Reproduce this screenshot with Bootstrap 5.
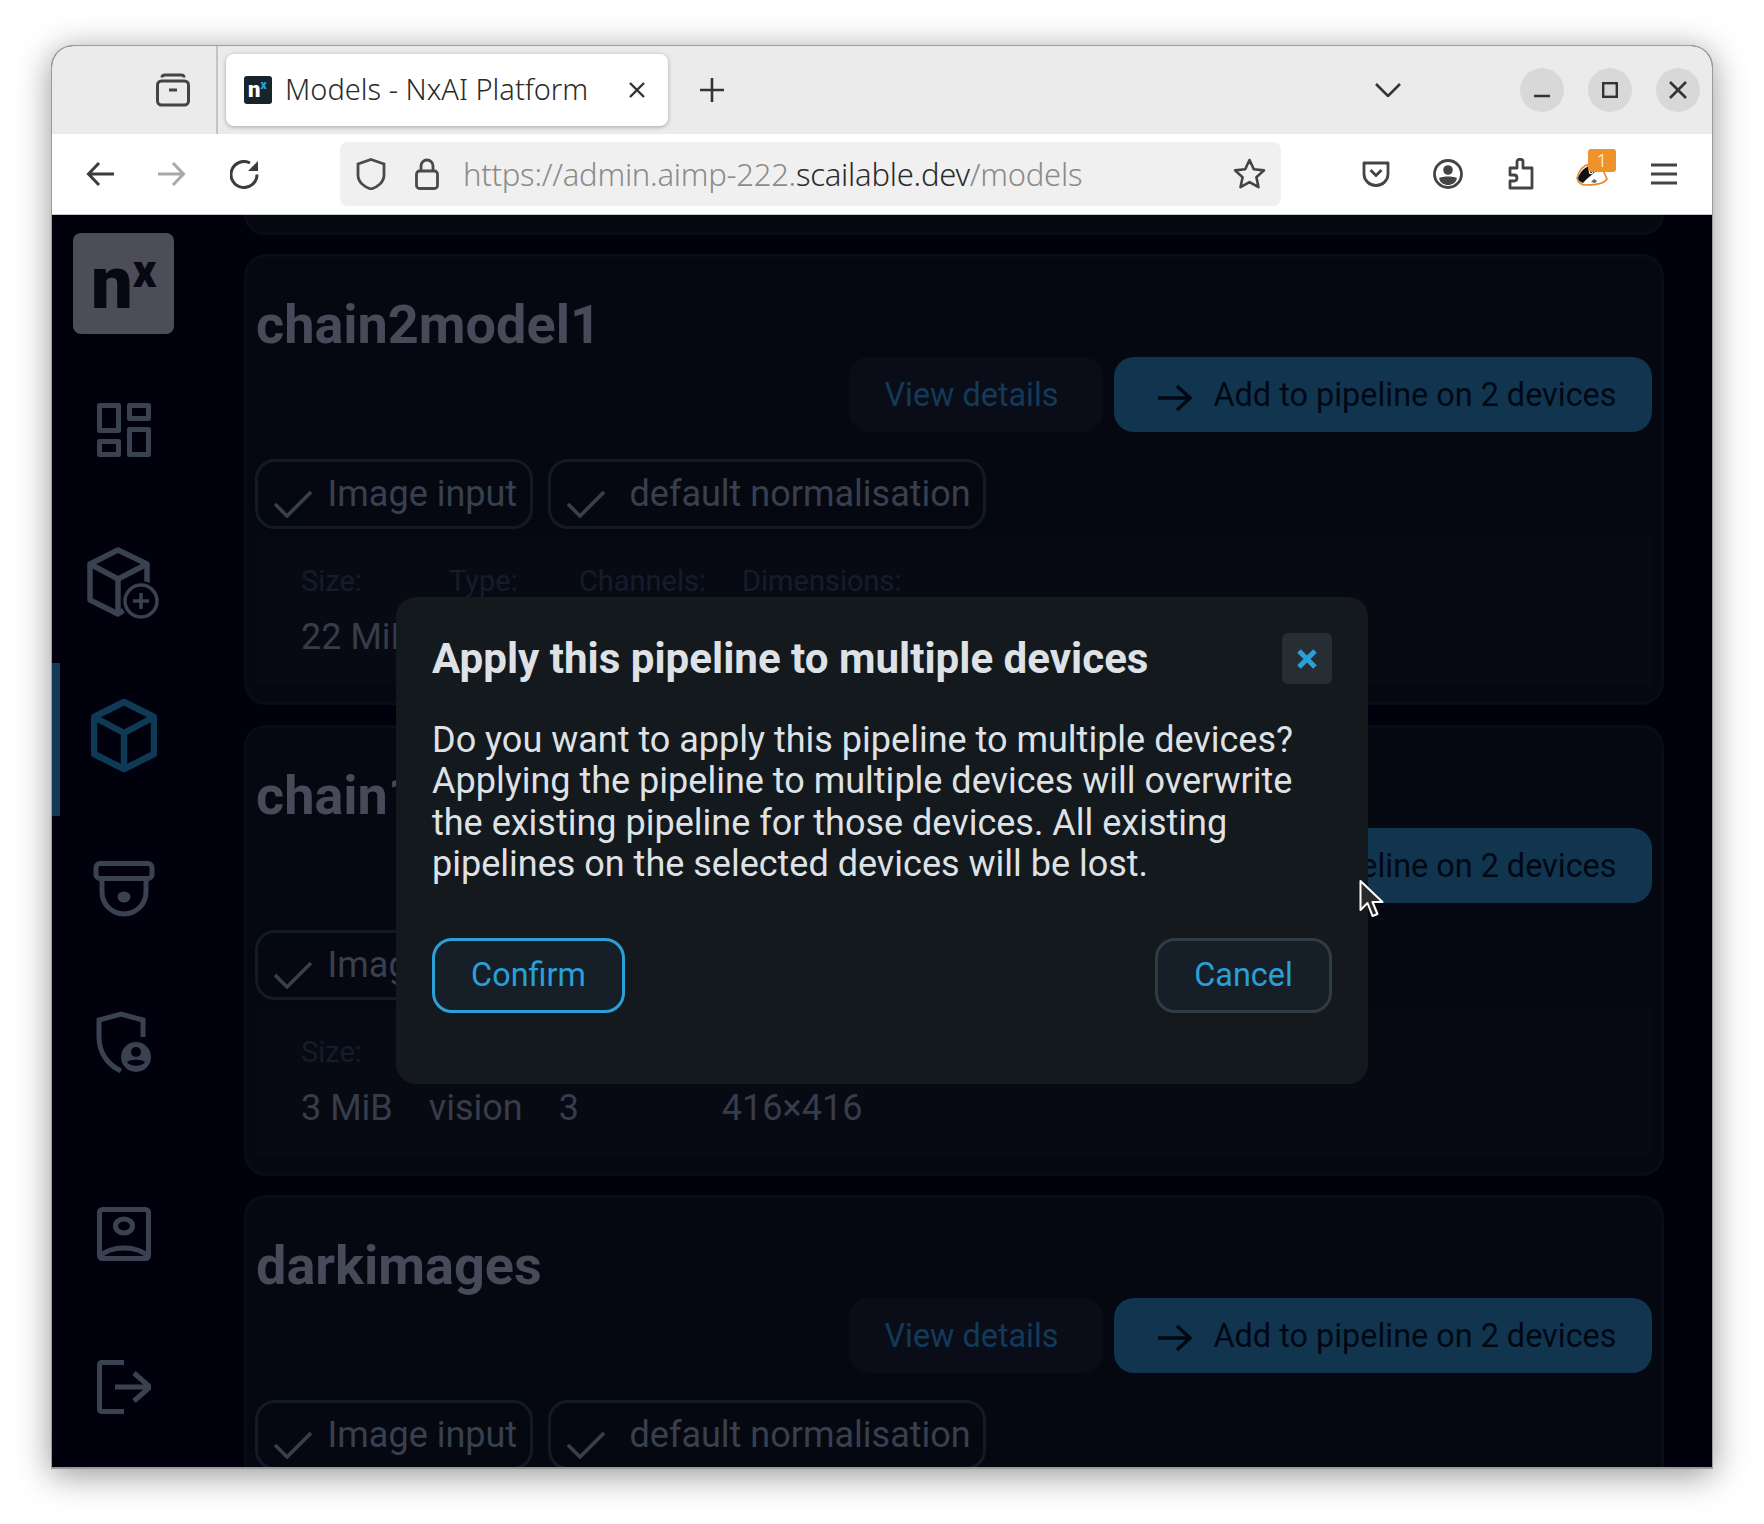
<!doctype html>
<html lang="en">
<head>
  <meta charset="UTF-8">
  <meta name="viewport" content="width=device-width, initial-scale=1">
  <title>Models - NxAI Platform</title>
  <link href="https://cdn.jsdelivr.net/npm/bootstrap@5.3.3/dist/css/bootstrap.min.css" rel="stylesheet">
  <style>
    html, body { width: 1764px; height: 1524px; overflow: hidden; background: #fff; }
    body { font-family: Roboto, "Liberation Sans", sans-serif; }

    /* browser window */
    .win { width: 1662px; height: 1424px; margin: 45px 0 0 51px; border: 1px solid #9b9b9b; border-bottom-width: 2px; border-radius: 22px 22px 0 0; box-shadow: 0 6px 34px rgba(0,0,0,.42); overflow: hidden; background: #01010d; }
    .strip { height: 88px; flex: none; background: #ebebeb; padding-right: 12px; }
    .view-cell { width: 166px; height: 100%; border-right: 2px solid #c4c4c4; padding-left: 104px; }
    .tabx { width: 442px; height: 72px; margin-left: 8px; background: #fff; border-radius: 8px; box-shadow: 0 1px 4px rgba(0,0,0,.3); padding: 0 22px 0 18px; }
    .tab-title { font: 300 29px "Noto Sans", Lato, sans-serif; color: #2b2b2b; margin: -3px 0 0 13px; white-space: nowrap; }
    .fav { width: 28px; height: 28px; background: #17242c; border-radius: 3px; color: #fff; font: 900 22px/27px Roboto, sans-serif; padding-left: 4px; }
    .fav sup { color: #2b9fd8; font-size: 12px; top: -.7em; }
    .plus-btn { margin-left: 32px; }
    .chev { margin-left: auto; margin-right: 95px; }
    .wbtn { width: 44px; height: 44px; border-radius: 50%; background: #d8d8d8; margin-left: 24px; }
    .tools { height: 81px; flex: none; background: #fff; border-bottom: 1px solid #c8c8c8; padding: 8px 12px 8px 34px; }
    .tools-nav { gap: 44px; }
    .url { width: 941px; height: 64px; margin-left: 81px; background: #f0f0f0; border-radius: 8px; padding: 0 15px 0 16px; }
    .lock-ic { margin-left: 29px; }
    .url-text { font: 300 31px "Noto Sans", Lato, sans-serif; color: #8b8b8b; margin-left: 24px; white-space: nowrap; letter-spacing: -.25px; }
    .url-text b { font-weight: 300; color: #2b2b2b; }
    .tcell { width: 72px; height: 64px; position: relative; }
    .badge-count { position: absolute; left: 32px; top: 7px; width: 28px; height: 23px; background: #f0922b; border-radius: 3px; color: #fff; font: 300 18px/23px "Noto Sans", sans-serif; text-align: center; }

    /* app */
    .app { flex: 1; min-height: 0; position: relative; overflow: hidden; }
    .side { width: 192px; flex: none; padding-top: 18px; }
    .logo-box { width: 101px; height: 101px; margin: 0 0 23px 21px; background: #4d4d59; border-radius: 8px; color: #070812; font: 900 74px/100px Roboto, sans-serif; padding: 0 0 0 18px; }
    .logo-box sup { font-size: 46px; top: -.46em; }
    .side-item { height: 153px; width: 146px; padding-bottom: 7px; border-left: 8px solid transparent; }
    .side-item.on { border-left-color: #123a57; }
    .side-gap { height: 39px; }
    .side-item svg { margin-left: -10px; }

    .list { flex: 1; padding-right: 48px; min-width: 0; }
    .mcard { background: #060811; border: 3px solid #090b15; border-radius: 22px; height: 451px; margin-bottom: 19.25px; padding: 0 9px; color: #474a58; }
    .mcard.stub { height: 20px; border-top: 0; border-radius: 0 0 22px 22px; }
    .mname { font-size: 54px; font-weight: 700; line-height: 60px; margin: 0; padding-top: 38px; height: 100px; color: #474a58; }
    .act-row { gap: 11px; }
    .act { height: 75px; border-radius: 20px; font-size: 32.4px; line-height: 75px; padding: 1px 0 0; border: 0; }
    .act-view { width: 254px; background: #0a0d17; color: #123a5a; padding-right: 9px; }
    .act-add { width: 538px; background: #12354f; color: #000814; padding-left: 9px; }
    .act-add svg { margin-right: 21px; }
    .tag-row { gap: 15px; margin: 27px 0 0 -1px; }
    .ftag { height: 70px; border: 3px solid #121a28; border-radius: 20px; color: #38404f; font-size: 36px; line-height: 64px; white-space: nowrap; }
    .ftag svg { margin-top: 28px; flex: none; }
    .ftag-a { width: 278px; padding-left: 16px; }
    .ftag-a svg { margin-right: 15.5px; }
    .ftag-b { width: 438px; padding-left: 16px; }
    .ftag-b svg { margin-right: 24.5px; }
    .spec { height: 148px; margin-top: 8px; background: #080a13; padding: 22px 45px; }
    .spec-table { border-collapse: collapse; }
    .spec-table th { font-size: 29px; font-weight: 400; color: #151c2b; padding: 0 36px 12px 0; line-height: 44px; white-space: nowrap; }
    .spec-table td { font-size: 36px; color: #373c4b; padding: 0 36px 0 0; line-height: 44px; white-space: nowrap; }

    /* dialog */
    .dlg { position: absolute; left: 344px; top: 382px; width: 972px; height: 487px; background: #14191d; border-radius: 20px; padding: 36px 36px 0; }
    .dlg-title { font-size: 42.1px; font-weight: 700; line-height: 51px; color: #dee2e6; margin: 0; white-space: nowrap; }
    .dlg-close { width: 50px; height: 51px; background: #262e33; border: 0; border-radius: 6px; padding: 0; }
    .dlg-text { font-size: 36px; line-height: 41.4px; color: #dee2e6; margin: 36px 0 0; }
    .dlg-foot { margin-top: 52px; }
    .dlg-btn { height: 75px; background: #161f27; border-radius: 20px; font-size: 32.4px; color: #2b9fd8; padding: 1px 0 0; }
    .dlg-btn:hover { background: #161f27; color: #2b9fd8; }
    .dlg-ok { width: 193px; border: 3px solid #2b9fd8; }
    .dlg-no { width: 177px; border: 3px solid #2f3c42; }
    .ptr { position: absolute; left: 1307px; top: 664px; }
  </style>
</head>
<body>
  <div class="win d-flex flex-column">
    <div class="strip d-flex align-items-center">
      <div class="view-cell d-flex align-items-center">
        <svg width="34" height="34" viewBox="0 0 34 34" fill="none" stroke="#444" stroke-width="3"><path d="M6 4.500Q6 2 9 2H25Q28 2 28 4.500"/><rect x="1.500" y="8" width="31" height="24" rx="4"/><path d="M13 17h8"/></svg>
      </div>
      <div class="tabx d-flex align-items-center">
        <div class="fav flex-shrink-0">n<sup>x</sup></div>
        <span class="tab-title">Models - NxAI Platform</span>
        <svg class="ms-auto" width="18" height="18" viewBox="0 0 18 18" stroke="#333" stroke-width="2.4"><path d="M2 2l14 14M16 2L2 16"/></svg>
      </div>
      <svg class="plus-btn" width="24" height="24" viewBox="0 0 24 24" stroke="#333" stroke-width="2.6"><path d="M12 0v24M0 12h24"/></svg>
      <svg class="chev" width="26" height="14" viewBox="0 0 26 14" fill="none" stroke="#333" stroke-width="2.6"><path d="M1 1l12 12L25 1"/></svg>
      <div class="wbtn d-flex align-items-center justify-content-center">
        <svg width="16" height="16" viewBox="0 0 16 16" stroke="#333" stroke-width="2.4"><path d="M0 14h16"/></svg>
      </div>
      <div class="wbtn d-flex align-items-center justify-content-center">
        <svg width="16" height="16" viewBox="0 0 16 16" fill="none" stroke="#333" stroke-width="2.4"><rect x="1.200" y="1.200" width="13.600" height="13.600"/></svg>
      </div>
      <div class="wbtn d-flex align-items-center justify-content-center">
        <svg width="18" height="18" viewBox="0 0 18 18" stroke="#333" stroke-width="2.6"><path d="M1 1l16 16M17 1L1 17"/></svg>
      </div>
    </div>

    <div class="tools d-flex align-items-center">
      <div class="tools-nav d-flex align-items-center">
        <svg width="28" height="26" viewBox="0 0 28 26" fill="none" stroke="#3c3c3c" stroke-width="3"><path d="M28 13H3M13 2L2.500 13 13 24"/></svg>
        <svg width="28" height="26" viewBox="0 0 28 26" fill="none" stroke="#a9a9a9" stroke-width="3"><path d="M0 13h25M15 2l10.500 11L15 24"/></svg>
        <svg width="29" height="29" viewBox="0 0 29 29" fill="none" stroke="#3c3c3c" stroke-width="3"><path d="M20 3A13 13 0 1 0 27 14.500"/><path d="M28 1v10H18z" fill="#3c3c3c" stroke="none"/></svg>
      </div>
      <div class="url d-flex align-items-center">
        <svg class="flex-shrink-0" width="30" height="32" viewBox="0 0 30 32" fill="none" stroke="#4a4a4a" stroke-width="2.800"><path d="M15 1.500L28 6v11c0 7-6 12-13 14C8 29 2 24 2 17V6z"/></svg>
        <svg class="flex-shrink-0 lock-ic" width="24" height="32" viewBox="0 0 24 32" fill="none" stroke="#4a4a4a" stroke-width="2.800"><rect x="1.500" y="13" width="21" height="17.500" rx="3"/><path d="M6 13V8a6 6 0 0 1 12 0v5"/></svg>
        <span class="url-text">https://admin.aimp-222.<b>scailable.dev</b>/models</span>
        <svg class="ms-auto flex-shrink-0" width="33" height="32" viewBox="0 0 33 32" fill="none" stroke="#444" stroke-width="2.600" stroke-linejoin="round"><path d="M16.500 2l4.300 9.300 10.200 1.100-7.600 6.800 2.100 10-9-5.100-9 5.100 2.100-10L2 12.400l10.200-1.100z"/></svg>
      </div>
      <div class="d-flex ms-auto">
        <div class="tcell d-flex align-items-center justify-content-center">
          <svg width="28" height="26" viewBox="0 0 28 26" fill="none" stroke="#444" stroke-width="2.800"><path d="M2 2h24v11a12 11.500 0 0 1-24 0z" stroke-linejoin="round"/><path d="M8.500 9l5.500 5.500L19.500 9"/></svg>
        </div>
        <div class="tcell d-flex align-items-center justify-content-center">
          <svg width="30" height="30" viewBox="0 0 30 30"><circle cx="15" cy="15" r="13.500" fill="none" stroke="#444" stroke-width="2.800"/><circle cx="15" cy="11" r="4.800" fill="#444"/><path d="M6 19c4 -2 14 -2 18 0c-1 5 -5 7 -9 7s-8 -2 -9 -7z" fill="#444"/></svg>
        </div>
        <div class="tcell d-flex align-items-center justify-content-center">
          <svg width="28" height="32" viewBox="0 0 28 32" fill="none" stroke="#444" stroke-width="2.800" stroke-linejoin="round"><path d="M11 10V3.500c0-3 6-3 6 0V10h9v20H4V23h4c4 0 4-6 0-6H4v-7z"/></svg>
        </div>
        <div class="tcell d-flex align-items-center justify-content-center">
          <svg width="32" height="24" viewBox="0 0 32 24"><path d="M1 16C3 8 8 3 14 2l12 4 5 11c-3 5-13 6-21 6C5 23 2 20 1 16z" fill="#fff" stroke="#e8862a" stroke-width="1.600"/><path d="M2 16C4 10 8 6 13 4l7 5c-4 4-10 8-13 12-3-1-5-3-5-5z" fill="#111"/><circle cx="15" cy="10" r="2.300" fill="#fff"/><circle cx="15" cy="10" r="1.100" fill="#111"/><path d="M15 20l3-3 3 2-2 2z" fill="#666"/></svg>
          <span class="badge-count">1</span>
        </div>
        <div class="tcell d-flex align-items-center justify-content-center">
          <svg width="26" height="22" viewBox="0 0 26 22" stroke="#444" stroke-width="2.800"><path d="M0 2h26M0 11h26M0 20h26"/></svg>
        </div>
      </div>
    </div>

    <div class="app d-flex">
      <div class="side">
        <div class="logo-box">n<sup>x</sup></div>
        <a class="side-item d-flex align-items-center justify-content-center">
          <svg width="54" height="54" viewBox="0 0 54 54" fill="none" stroke="#3a4150" stroke-width="5" stroke-linejoin="round"><rect x="2.500" y="2.500" width="19" height="25"/><rect x="2.500" y="38.500" width="19" height="13"/><rect x="32.500" y="2.500" width="19" height="13"/><rect x="32.500" y="26.500" width="19" height="25"/></svg>
        </a>
        <a class="side-item d-flex align-items-center justify-content-center">
          <svg width="74" height="72" viewBox="0 0 74 72" fill="none" stroke="#3a4150" stroke-width="5.500" stroke-linejoin="round"><path d="M31 3l29 14v31L31 67 3 53V17z"/><path d="M3 17l28 15 29-15M31 32v34"/><circle cx="54" cy="54" r="20" fill="#01010d" stroke="none"/><circle cx="54" cy="54" r="16" stroke-width="3.500"/><path d="M54 46v16M46 54h16" stroke-width="3.500"/></svg>
        </a>
        <a class="side-item on d-flex align-items-center justify-content-center">
          <svg width="66" height="74" viewBox="0 0 66 74" fill="none" stroke="#0f3a55" stroke-width="6.500" stroke-linejoin="round"><path d="M33 3l30 15v37L33 70 3 55V18z"/><path d="M3 18l30 16 30-16M33 34v36"/></svg>
        </a>
        <a class="side-item d-flex align-items-center justify-content-center">
          <svg width="62" height="56" viewBox="0 0 62 56" fill="none" stroke="#3a4150" stroke-width="5" stroke-linejoin="round"><rect x="3" y="2.500" width="56" height="15" rx="4"/><path d="M9 18v13a22 22 0 0 0 44 0V18"/><ellipse cx="31" cy="36" rx="6.500" ry="5.500" fill="#3a4150" stroke="none"/></svg>
        </a>
        <a class="side-item d-flex align-items-center justify-content-center">
          <svg width="56" height="62" viewBox="0 0 56 62"><path d="M47 26V9L25 3 3 9v17c0 16 9 28 22 34" fill="none" stroke="#3a4150" stroke-width="5"/><circle cx="40" cy="46" r="15" fill="#3a4150"/><circle cx="40" cy="41" r="5" fill="#01010d"/><path d="M31 51c4-3 14-3 18 0-3 5-15 5-18 0z" fill="#01010d"/></svg>
        </a>
        <div class="side-gap"></div>
        <a class="side-item d-flex align-items-center justify-content-center">
          <svg width="54" height="54" viewBox="0 0 54 54" fill="none" stroke="#3a4150" stroke-width="5" stroke-linejoin="round"><rect x="2.500" y="2.500" width="49" height="49" rx="3"/><ellipse cx="27" cy="19" rx="8.500" ry="7"/><path d="M3 50c8-12 40-12 48 0"/></svg>
        </a>
        <a class="side-item d-flex align-items-center justify-content-center">
          <svg width="54" height="54" viewBox="0 0 54 54" fill="none" stroke="#3a4150" stroke-width="5"><path d="M27 2.500H4.500a2 2 0 0 0-2 2v45a2 2 0 0 0 2 2H27"/><path d="M18 27h33M37 13l16 14-16 14"/></svg>
        </a>
      </div>

      <div class="list">
        <div class="mcard stub"></div>

        <div class="card mcard">
          <h2 class="mname">chain2model1</h2>
          <div class="act-row d-flex justify-content-end">
            <button class="btn act act-view">View details</button>
            <button class="btn act act-add"><svg width="34" height="28" viewBox="0 0 34 28" fill="none" stroke="#000814" stroke-width="3.500"><path d="M0 14h32M19 2l13 12-13 12"/></svg>Add to pipeline on 2 devices</button>
          </div>
          <div class="tag-row d-flex">
            <div class="ftag ftag-a d-flex"><svg width="38" height="28" viewBox="0 0 38 28" fill="none" stroke="#38404f" stroke-width="3.500"><path d="M1 14l12 12L37 2"/></svg>Image input</div>
            <div class="ftag ftag-b d-flex"><svg width="38" height="28" viewBox="0 0 38 28" fill="none" stroke="#38404f" stroke-width="3.500"><path d="M1 14l12 12L37 2"/></svg>default normalisation</div>
          </div>
          <div class="spec">
            <table class="spec-table">
              <tr><th>Size:</th><th>Type:</th><th>Channels:</th><th>Dimensions:</th></tr>
              <tr><td>22 MiB</td><td>vision</td><td>3</td><td>416×416</td></tr>
            </table>
          </div>
        </div>

        <div class="card mcard">
          <h2 class="mname">chain1model1</h2>
          <div class="act-row d-flex justify-content-end">
            <button class="btn act act-view">View details</button>
            <button class="btn act act-add"><svg width="34" height="28" viewBox="0 0 34 28" fill="none" stroke="#000814" stroke-width="3.500"><path d="M0 14h32M19 2l13 12-13 12"/></svg>Add to pipeline on 2 devices</button>
          </div>
          <div class="tag-row d-flex">
            <div class="ftag ftag-a d-flex"><svg width="38" height="28" viewBox="0 0 38 28" fill="none" stroke="#38404f" stroke-width="3.500"><path d="M1 14l12 12L37 2"/></svg>Image input</div>
            <div class="ftag ftag-b d-flex"><svg width="38" height="28" viewBox="0 0 38 28" fill="none" stroke="#38404f" stroke-width="3.500"><path d="M1 14l12 12L37 2"/></svg>default normalisation</div>
          </div>
          <div class="spec">
            <table class="spec-table">
              <tr><th>Size:</th><th>Type:</th><th>Channels:</th><th>Dimensions:</th></tr>
              <tr><td>3 MiB</td><td>vision</td><td>3</td><td>416×416</td></tr>
            </table>
          </div>
        </div>

        <div class="card mcard">
          <h2 class="mname">darkimages</h2>
          <div class="act-row d-flex justify-content-end">
            <button class="btn act act-view">View details</button>
            <button class="btn act act-add"><svg width="34" height="28" viewBox="0 0 34 28" fill="none" stroke="#000814" stroke-width="3.500"><path d="M0 14h32M19 2l13 12-13 12"/></svg>Add to pipeline on 2 devices</button>
          </div>
          <div class="tag-row d-flex">
            <div class="ftag ftag-a d-flex"><svg width="38" height="28" viewBox="0 0 38 28" fill="none" stroke="#38404f" stroke-width="3.500"><path d="M1 14l12 12L37 2"/></svg>Image input</div>
            <div class="ftag ftag-b d-flex"><svg width="38" height="28" viewBox="0 0 38 28" fill="none" stroke="#38404f" stroke-width="3.500"><path d="M1 14l12 12L37 2"/></svg>default normalisation</div>
          </div>
        </div>
      </div>

      <div class="dlg">
        <div class="d-flex justify-content-between align-items-center">
          <h5 class="dlg-title">Apply this pipeline to multiple devices</h5>
          <button class="dlg-close d-flex align-items-center justify-content-center">
            <svg width="20" height="20" viewBox="0 0 20 20" stroke="#2b9fd8" stroke-width="5"><path d="M2 2l16 16M18 2L2 18"/></svg>
          </button>
        </div>
        <p class="dlg-text">Do you want to apply this pipeline to multiple devices? Applying the pipeline to multiple devices will overwrite the existing pipeline for those devices. All existing pipelines on the selected devices will be lost.</p>
        <div class="dlg-foot d-flex justify-content-between">
          <button class="btn dlg-btn dlg-ok">Confirm</button>
          <button class="btn dlg-btn dlg-no">Cancel</button>
        </div>
      </div>

      <svg class="ptr" width="26" height="40" viewBox="0 0 26 40"><path d="M1.500 2v29l7-7 5 13 5-2-5-12h10z" fill="#2b2b2b" stroke="#fff" stroke-width="2" stroke-linejoin="round"/></svg>
    </div>
  </div>
  <script src="https://cdn.jsdelivr.net/npm/bootstrap@5.3.3/dist/js/bootstrap.bundle.min.js"></script>
</body>
</html>
